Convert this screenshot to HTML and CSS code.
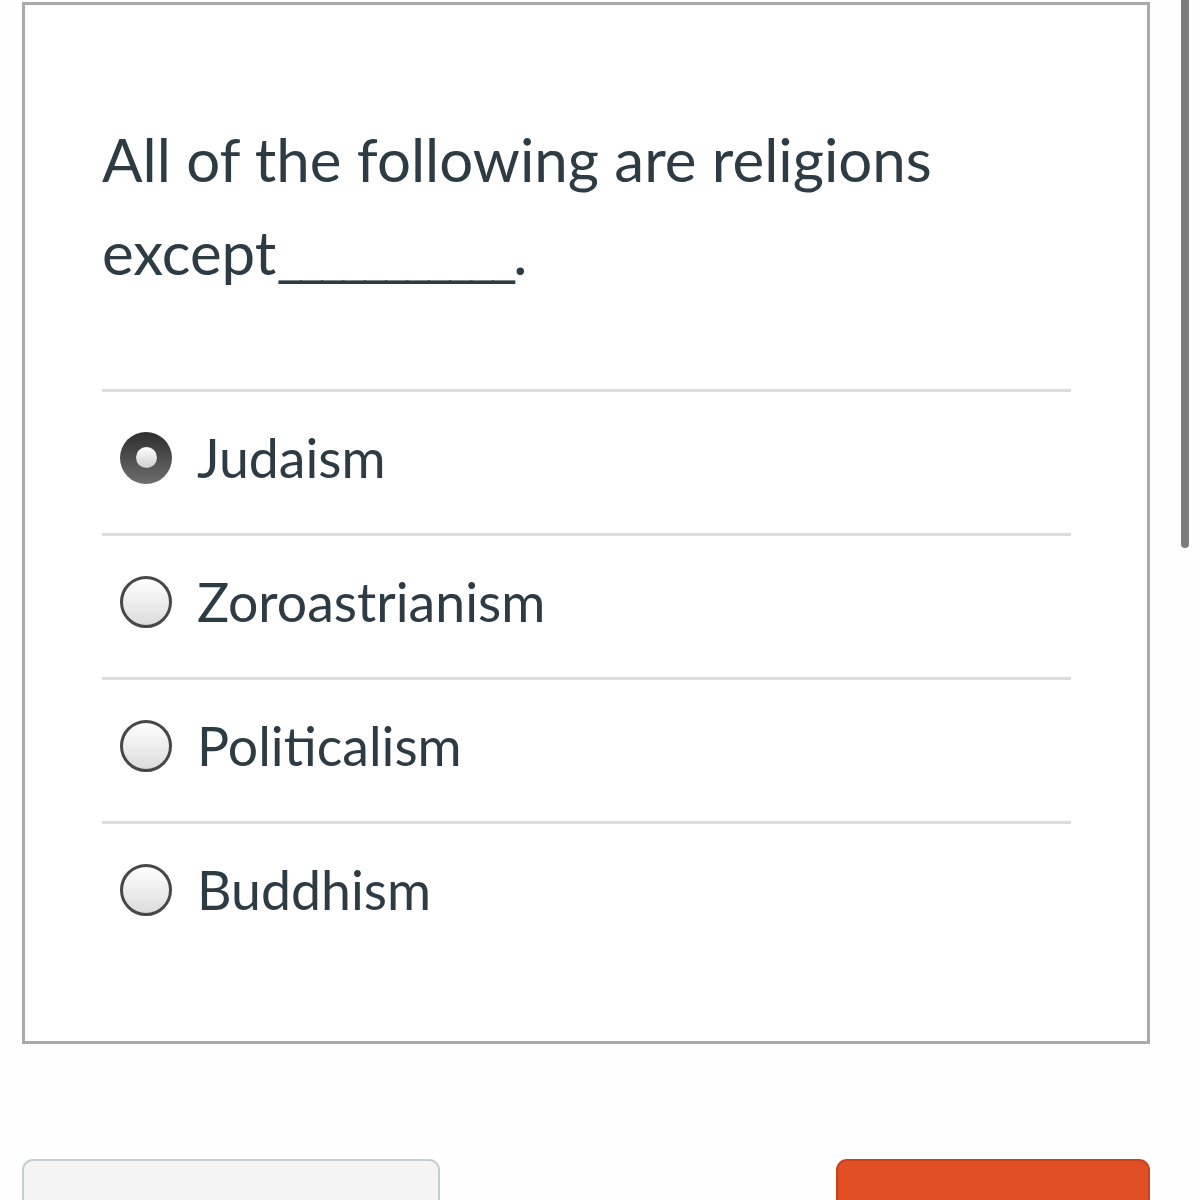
FILE: index.html
```html
<!DOCTYPE html>
<html lang="en">
<head>
<meta charset="utf-8">
<title>Quiz question</title>
<link rel="stylesheet" href="styles.css">
</head>
<body>
<div class="scrollbar"></div>
<main class="page">
  <section class="card">
    <p class="question">All of the following are religions <span class="tail">except<span class="blank">___________</span>.</span></p>
    <ul class="answers">
      <li class="answer"><span class="radio selected"></span><span class="label">Judaism</span></li>
      <li class="answer"><span class="radio"></span><span class="label">Zoroastrianism</span></li>
      <li class="answer"><span class="radio"></span><span class="label">Politicalism</span></li>
      <li class="answer"><span class="radio"></span><span class="label">Buddhism</span></li>
    </ul>
  </section>
  <div class="actions">
    <button class="btn btn-secondary" type="button"></button>
    <button class="btn btn-primary" type="button"></button>
  </div>
</main>
</body>
</html>
```
FILE: styles.css
```css
html, body {
  margin: 0;
  padding: 0;
  background: #fefefe;
  font-family: Lato, "Noto Sans", sans-serif;
  color: #2d3b45;
  overflow: hidden;
}
.page {
  width: 1128px;
  margin-left: 22px;
  padding-top: 2px;
}
.card {
  border: 3px solid #aaaaaa;
  background: #fff;
  padding: 108px 76px 76px 77px;
}
.question {
  margin: 0 0 90px;
  font-size: 60px;
  line-height: 93px;
  font-weight: 400;
  width: 870px;
}
.tail {
  white-space: nowrap;
}
.blank {
  letter-spacing: -6.2px;
  padding-right: 2px;
}
.answers {
  list-style: none;
  margin: 0;
  padding: 0;
}
.answer {
  display: flex;
  align-items: center;
  height: 131px;
  padding-bottom: 10px;
  border-top: 3px solid #dddddd;
}
.radio {
  box-sizing: border-box;
  width: 52px;
  height: 52px;
  margin-left: 18px;
  margin-right: 25px;
  border-radius: 50%;
  border: 3px solid #474747;
  background: linear-gradient(#ffffff, #dcdcdc);
  display: flex;
  align-items: center;
  justify-content: center;
  flex: none;
}
.radio.selected {
  border: none;
  background: linear-gradient(#2e2e2e, #6e6e6e);
}
.radio.selected::after {
  content: "";
  width: 21px;
  height: 21px;
  border-radius: 50%;
  background: linear-gradient(#ffffff, #cfcfcf);
}
.label {
  font-size: 53.6px;
  line-height: 1;
}
.actions {
  display: flex;
  justify-content: space-between;
  margin-top: 115px;
}
.btn {
  height: 80px;
  border-radius: 11px;
  padding: 0;
}
.btn-secondary {
  width: 418px;
  background: #f4f4f4;
  border: 2px solid #c7cdd1;
}
.btn-primary {
  width: 314px;
  background: #e14e24;
  border: 2px solid #c9431e;
}
.scrollbar {
  position: fixed;
  top: 0;
  left: 1181px;
  width: 8px;
  height: 548px;
  border-radius: 0 0 4px 4px;
  background: #7b7b7b;
}
```
